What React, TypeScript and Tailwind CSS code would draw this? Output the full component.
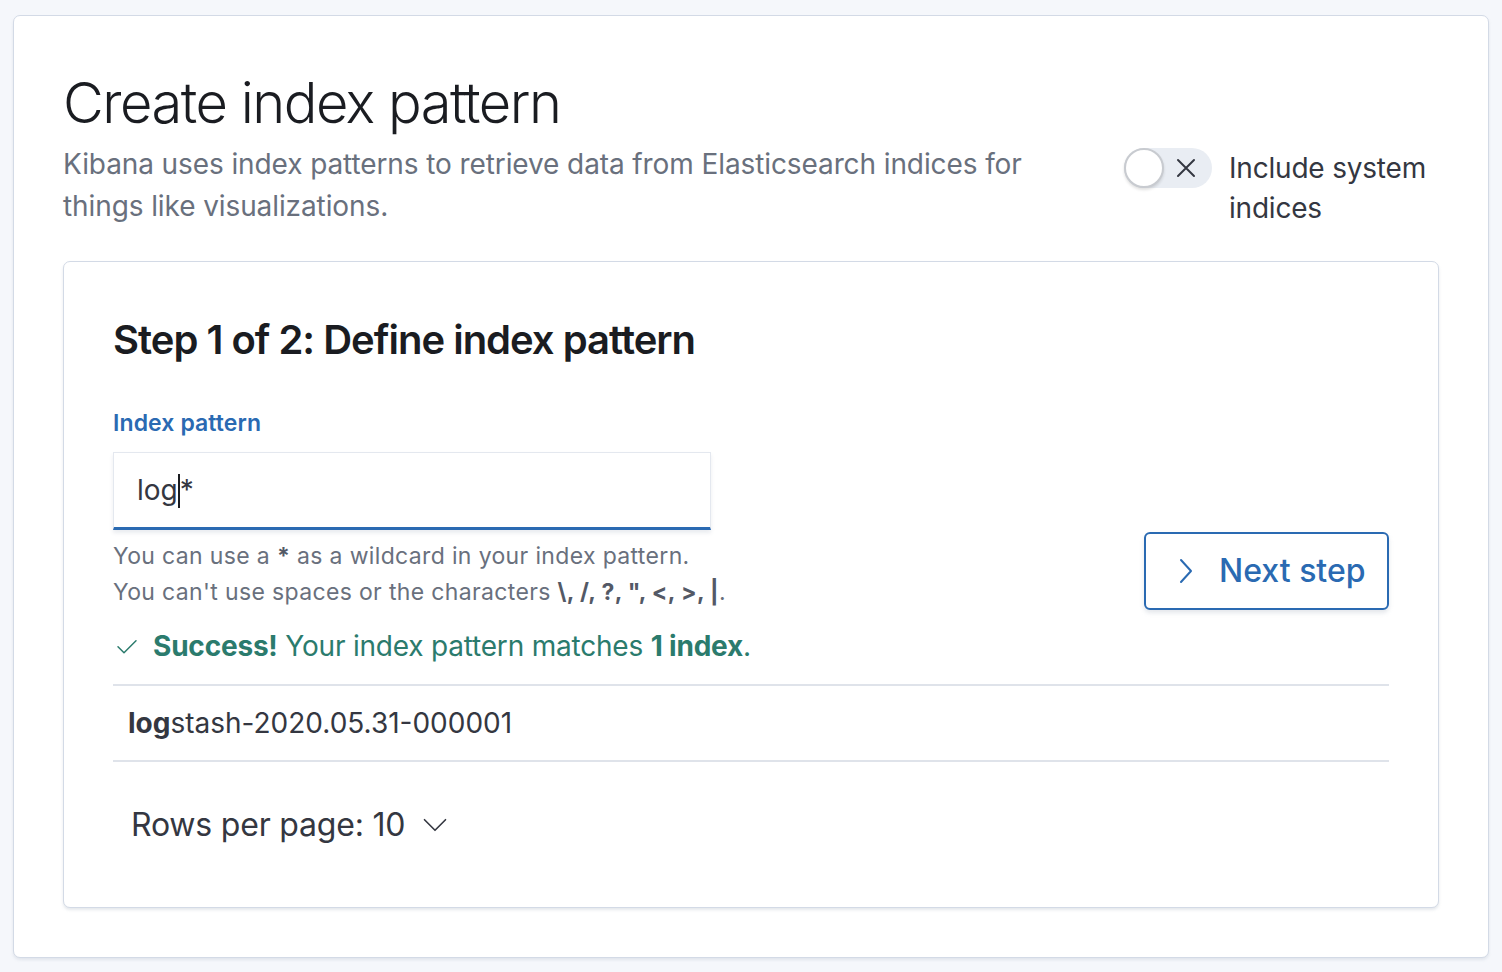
import { useState } from "react";

const FONT = "Inter, 'Noto Sans', 'Liberation Sans', sans-serif";

function CheckIcon() {
  return (
    <svg width="24" height="24" viewBox="0 0 16 16" fill="none" stroke="currentColor" strokeWidth="1" strokeLinecap="round" strokeLinejoin="round">
      <path d="M2 8.5l4 4L14 4.5" />
    </svg>
  );
}

function ChevronRight() {
  return (
    <svg width="14" height="26" viewBox="0 0 7 13" fill="none" stroke="currentColor" strokeWidth="1" strokeLinecap="round" strokeLinejoin="round">
      <path d="M1 1l5 5.5L1 12" />
    </svg>
  );
}

function ChevronDown() {
  return (
    <svg width="24" height="14" viewBox="0 0 16 9" fill="none" stroke="currentColor" strokeWidth="1.1" strokeLinecap="round" strokeLinejoin="round">
      <path d="M1 1l7 7 7-7" />
    </svg>
  );
}

function Toggle() {
  const [on, setOn] = useState(false);
  return (
    <button
      onClick={() => setOn(!on)}
      className="relative flex h-[40px] w-[88px] shrink-0 items-center rounded-full bg-[#e9edf3]"
    >
      <span className="absolute left-0 top-0 h-[40px] w-[40px] rounded-full border-2 border-[#c8cbd0] bg-white shadow-[0_2px_3px_rgba(0,0,0,0.12)]" />
      <svg className="absolute left-[52px] top-[10px]" width="20" height="20" viewBox="0 0 20 20" stroke="#343741" strokeWidth="2" strokeLinecap="round">
        <path d="M2 2l16 16M18 2L2 18" />
      </svg>
    </button>
  );
}

export default function App() {
  return (
    <div className="min-h-[972px] bg-[#f5f7fb] px-[13px] pb-[15px] pt-[15px]" style={{ fontFamily: FONT }}>
      <div className="rounded-[7px] border border-[#d3dae6] bg-white px-[49px] pb-[49px] pt-[55px] shadow-[0_2px_3px_rgba(152,162,179,0.2)]">
        {/* Header */}
        <h1 className="text-[56px] font-light leading-[64px] tracking-[-1.5px] text-[#1a1c21]">Create index pattern</h1>
        <div className="mt-[8px] flex items-start justify-between">
          <p className="w-[1000px] text-[28px] leading-[42px] tracking-[-0.1px] text-[#69707d]">
            Kibana uses index patterns to retrieve data from Elasticsearch indices for things like visualizations.
          </p>
          <div className="mt-[5px] flex w-[315px] items-start gap-[17px]">
            <Toggle />
            <span className="text-[28px] leading-[40px] tracking-[-0.2px] text-[#343741]">Include system indices</span>
          </div>
        </div>

        {/* Step panel */}
        <div className="mt-[33px] rounded-[7px] border border-[#d3dae6] bg-white px-[49px] pb-[49px] pt-[54px] shadow-[0_2px_3px_rgba(152,162,179,0.25)]">
          <h2 className="text-[40px] font-semibold leading-[48px] tracking-[-1px] text-[#1a1c21]">Step 1 of 2: Define index pattern</h2>

          <div className="mt-[46px] flex items-start justify-between">
            <div className="w-[600px]">
              <label className="block text-[23px] font-semibold leading-[26px] tracking-[0.1px] text-[#2a6ab2]">Index pattern</label>
              <div className="mt-[16px] flex h-[78px] w-[598px] items-center border border-b-[3px] border-[#e4e8ef] border-b-[#2a6ab2] bg-white pl-[23px] shadow-[0_3px_4px_rgba(152,162,179,0.2)]">
                <span className="text-[28px] leading-[40px] text-[#343741]">log</span>
                <span className="mt-[2px] h-[34px] w-[2px] bg-[#1a1c21]" />
                <span className="text-[28px] leading-[40px] text-[#343741]">*</span>
              </div>
              <div className="mt-[8px] whitespace-nowrap text-[23px] leading-[36px] tracking-[0.35px] text-[#69707d]">
                <p>
                  You can use a <b className="font-bold text-[#535966]">*</b> as a wildcard in your index pattern.
                </p>
                <p>
                  You can't use spaces or the characters <b className="font-bold text-[#535966]">\, /, ?, ", &lt;, &gt;, |</b>.
                </p>
              </div>
              <div className="mt-[16px] flex items-center gap-[14px] whitespace-nowrap text-[28px] leading-[40px] tracking-[-0.2px] text-[#2b7b6d]">
                <span className="ml-[2px]"><CheckIcon /></span>
                <span>
                  <b className="font-bold">Success!</b> Your index pattern matches <b className="font-bold">1 index</b>.
                </span>
              </div>
            </div>

            <button className="mt-[122px] flex h-[78px] w-[245px] items-center gap-[26px] rounded-[6px] border-2 border-[#2a6ab2] bg-white pl-[33px] text-[32px] font-medium text-[#2a6ab2] shadow-[0_3px_4px_rgba(152,162,179,0.25)]">
              <ChevronRight />
              <span>Next step</span>
            </button>
          </div>

          {/* Table */}
          <div className="mt-[18px] border-y-2 border-[#dfe3ea]">
            <div className="flex h-[74px] items-center pl-[15px] text-[28px] text-[#343741]">
              <b className="font-bold">log</b>stash-2020.05.31-000001
            </div>
          </div>

          <div className="mt-[30px] flex h-[66px] items-center gap-[18px] pl-[18px] text-[32px] tracking-[-0.2px] text-[#343741]">
            <span>Rows per page: 10</span>
            <ChevronDown />
          </div>
        </div>
      </div>
    </div>
  );
}
